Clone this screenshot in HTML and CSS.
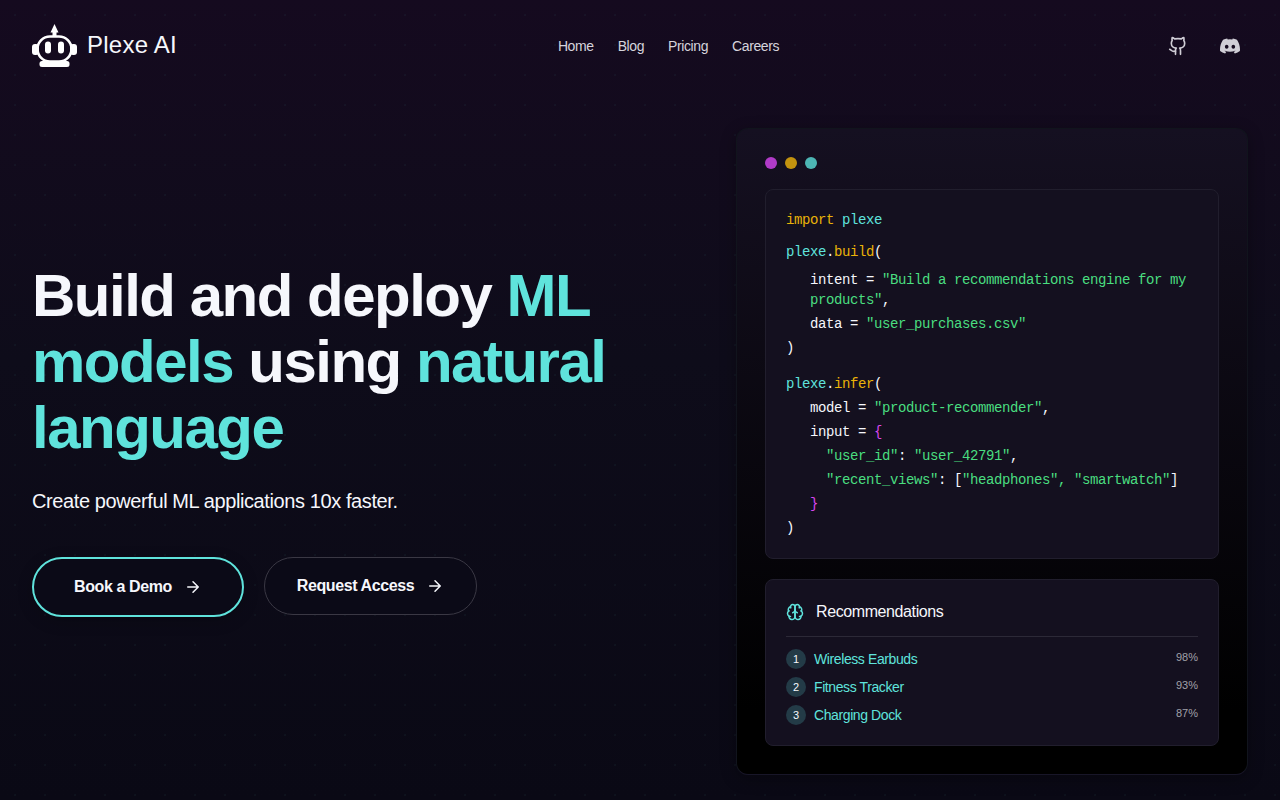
FILE: index.html
```html
<!DOCTYPE html>
<html lang="en">
<head>
  <meta charset="UTF-8" />
  <meta name="viewport" content="width=device-width, initial-scale=1.0"/>
  <title>Plexe AI</title>
  <link rel="stylesheet" href="styles.css">
</head>
<body>
  <header class="navbar">
    <a class="brand" href="#">
      <svg class="brand-logo" viewBox="0 0 45 44" aria-hidden="true">
        <path d="M22.500 0L26.500 8.500H24.500V12H20.500V8.500H18.500Z" fill="#fff"/>
        <rect x="0" y="20" width="7" height="11" rx="3" fill="#fff"/>
        <rect x="38" y="20" width="7" height="11" rx="3" fill="#fff"/>
        <rect x="5.500" y="12.500" width="34" height="25" rx="12.500" fill="none" stroke="#fff" stroke-width="2.600"/>
        <rect x="13" y="17.500" width="6" height="12" rx="3" fill="#fff"/>
        <rect x="26" y="17.500" width="6" height="12" rx="3" fill="#fff"/>
        <rect x="7.500" y="37" width="30" height="6" rx="2.500" fill="#fff"/>
      </svg>
      <span class="brand-name">Plexe AI</span>
    </a>
    <nav class="nav-links">
      <a href="#">Home</a>
      <a href="#">Blog</a>
      <a href="#">Pricing</a>
      <a href="#">Careers</a>
    </nav>
    <div class="social">
      <a href="#" aria-label="GitHub">
        <svg viewBox="0 0 24 24" width="20" height="20" fill="none" stroke="currentColor" stroke-width="2" stroke-linecap="round" stroke-linejoin="round">
          <path d="M15 22v-4a4.800 4.800 0 0 0-1-3.500c3 0 6-2 6-5.500.08-1.250-.27-2.480-1-3.500.28-1.150.28-2.350 0-3.500 0 0-1 0-3 1.500-2.640-.5-5.360-.5-8 0C6 2 5 2 5 2c-.3 1.150-.3 2.350 0 3.500A5.403 5.403 0 0 0 4 9c0 3.500 3 5.500 6 5.500-.39.490-.68 1.050-.85 1.650-.17.6-.22 1.230-.15 1.850v4"/>
          <path d="M9 18c-4.510 2-5-2-7-2"/>
        </svg>
      </a>
      <a href="#" aria-label="Discord">
        <svg viewBox="0 0 24 24" width="20" height="20" fill="currentColor">
          <path d="M20.317 4.370a19.791 19.791 0 0 0-4.885-1.515.074.074 0 0 0-.079.037c-.21.375-.444.864-.608 1.250a18.270 18.270 0 0 0-5.487 0 12.640 12.640 0 0 0-.617-1.250.077.077 0 0 0-.079-.037A19.736 19.736 0 0 0 3.677 4.370a.07.07 0 0 0-.032.027C.533 9.046-.32 13.580.099 18.057a.082.082 0 0 0 .031.057 19.900 19.900 0 0 0 5.993 3.030.078.078 0 0 0 .084-.028c.462-.63.874-1.295 1.226-1.994a.076.076 0 0 0-.041-.106 13.107 13.107 0 0 1-1.872-.892.077.077 0 0 1-.008-.128 10.200 10.200 0 0 0 .372-.292.074.074 0 0 1 .077-.010c3.928 1.793 8.180 1.793 12.062 0a.074.074 0 0 1 .078.010c.12.098.246.198.373.292a.077.077 0 0 1-.006.127 12.299 12.299 0 0 1-1.873.892.077.077 0 0 0-.041.107c.36.698.772 1.362 1.225 1.993a.076.076 0 0 0 .084.028 19.839 19.839 0 0 0 6.002-3.030.077.077 0 0 0 .032-.054c.5-5.177-.838-9.674-3.549-13.660a.061.061 0 0 0-.031-.030zM8.020 15.330c-1.183 0-2.157-1.085-2.157-2.419 0-1.333.956-2.419 2.157-2.419 1.210 0 2.176 1.096 2.157 2.420 0 1.333-.956 2.418-2.157 2.418zm7.975 0c-1.183 0-2.157-1.085-2.157-2.419 0-1.333.955-2.419 2.157-2.419 1.210 0 2.176 1.096 2.157 2.420 0 1.333-.946 2.418-2.157 2.418z"/>
        </svg>
      </a>
    </div>
  </header>

  <main class="hero">
    <section class="hero-text">
      <h1>Build and deploy <span>ML models</span> using <span>natural language</span></h1>
      <p>Create powerful ML applications 10x faster.</p>
      <div class="actions">
        <button class="btn primary">Book a Demo
          <svg class="arrow" viewBox="0 0 24 24"><path d="M5 12h14M12 5l7 7-7 7"/></svg>
        </button>
        <button class="btn secondary">Request Access
          <svg class="arrow" viewBox="0 0 24 24"><path d="M5 12h14M12 5l7 7-7 7"/></svg>
        </button>
      </div>
    </section>

    <section class="demo">
      <div class="dots">
        <span class="dot pink"></span>
        <span class="dot yellow"></span>
        <span class="dot teal"></span>
      </div>

      <code class="panel code">
        <span class="line"><b class="fn">import</b> <b class="mod">plexe</b></span>
        <span class="line call"><b class="mod">plexe</b>.<b class="fn">build</b>(</span>
        <span class="line indent first">intent = <b class="str">"Build a recommendations engine for my products"</b>,</span>
        <span class="line indent">data = <b class="str">"user_purchases.csv"</b></span>
        <span class="line">)</span>
        <span class="line second-call"><b class="mod">plexe</b>.<b class="fn">infer</b>(</span>
        <span class="line indent">model = <b class="str">"product-recommender"</b>,</span>
        <span class="line indent">input = <b class="brace">{</b></span>
        <span class="line indent-2"><b class="str">"user_id"</b>: <b class="str">"user_42791"</b>,</span>
        <span class="line indent-2"><b class="str">"recent_views"</b>: [<b class="str">"headphones", "smartwatch"</b>]</span>
        <span class="line indent"><b class="brace">}</b></span>
        <span class="line">)</span>
      </code>

      <div class="panel results">
        <h2>
          <svg viewBox="0 0 24 24" width="18" height="18" fill="none" stroke="currentColor" stroke-width="2" stroke-linecap="round" stroke-linejoin="round">
            <path d="M12 5a3 3 0 1 0-5.997.125 4 4 0 0 0-2.526 5.770 4 4 0 0 0 .556 6.588A4 4 0 1 0 12 18Z"/>
            <path d="M12 5a3 3 0 1 1 5.997.125 4 4 0 0 1 2.526 5.770 4 4 0 0 1-.556 6.588A4 4 0 1 1 12 18Z"/>
            <path d="M15 13a4.500 4.500 0 0 1-3-4 4.500 4.500 0 0 1-3 4"/>
            <path d="M17.599 6.500a3 3 0 0 0 .399-1.375M6.003 5.125A3 3 0 0 0 6.401 6.500M3.477 10.896a4 4 0 0 1 .585-.396M19.938 10.500a4 4 0 0 1 .585.396M6 18a4 4 0 0 1-1.967-.516M19.967 17.484A4 4 0 0 1 18 18"/>
          </svg>
          Recommendations
        </h2>
        <ol>
          <li><span class="rank">1</span><span class="item">Wireless Earbuds</span><span class="score">98%</span></li>
          <li><span class="rank">2</span><span class="item">Fitness Tracker</span><span class="score">93%</span></li>
          <li><span class="rank">3</span><span class="item">Charging Dock</span><span class="score">87%</span></li>
        </ol>
      </div>
    </section>
  </main>
</body>
</html>
```
FILE: styles.css
```css
* {
  box-sizing: border-box;
}

body {
  margin: 0;
  min-height: 100vh;
  font-family: "Liberation Sans", Arial, sans-serif;
  font-size: 16px;
  line-height: 24px;
  letter-spacing: -0.025em;
  color: #f6f7fc;
  background:
    radial-gradient(circle, rgba(95, 227, 220, 0.04) 1px, transparent 1px) 0 0 / 30px 30px,
    linear-gradient(180deg, #150a1f 0%, #0e0c1a 45%, #0a0915 100%);
}

a {
  color: inherit;
  text-decoration: none;
}

h1, h2, p, ol {
  margin: 0;
  padding: 0;
}

/* Navbar */
.navbar {
  display: flex;
  justify-content: space-between;
  align-items: center;
  padding: 24px 32px;
}

.brand {
  display: flex;
  align-items: center;
  gap: 10px;
}

.brand-logo {
  width: 45px;
  height: 44px;
}

.brand-name {
  font-size: 24px;
  line-height: 32px;
  padding-bottom: 2px;
  letter-spacing: 0.01em;
}

.nav-links {
  display: flex;
  gap: 24px;
  font-size: 14px;
  line-height: 20px;
  color: #d6d4dc;
}

.social {
  display: flex;
  justify-content: flex-end;
  gap: 16px;
  color: #d0ced6;
}

.social a {
  display: flex;
  padding: 8px;
}

.nav-links a:hover,
.social a:hover {
  color: #5fe3dc;
}

/* Hero */
.hero {
  display: grid;
  grid-template-columns: 1fr 1fr;
  gap: 32px;
  align-items: center;
  padding: 36px 32px 24px;
}

.hero-text {
  padding-bottom: 24px;
}

h1 {
  font-size: 60px;
  line-height: 66px;
  font-weight: bold;
  letter-spacing: -0.025em;
}

h1 span {
  color: #5fe3dc;
}

.hero-text p {
  margin: 24px 0 40px;
  font-size: 20px;
  line-height: 32px;
}

.actions {
  display: flex;
  align-items: flex-start;
  gap: 20px;
}

.btn {
  display: flex;
  align-items: center;
  gap: 12px;
  border-radius: 32px;
  background: #0b0a17;
  color: #f6f7fc;
  font: inherit;
  font-weight: bold;
  letter-spacing: inherit;
  cursor: pointer;
}

.btn.primary {
  padding: 16px 40px;
  border: 2px solid #5fe3dc;
  box-shadow: 0 4px 16px rgba(0, 0, 0, 0.2);
}

.btn.secondary {
  padding: 16px 32px;
  border: 1px solid #3a3844;
}

.arrow {
  width: 18px;
  height: 18px;
  fill: none;
  stroke: currentColor;
  stroke-width: 2;
  stroke-linecap: round;
  stroke-linejoin: round;
}

/* Demo card */
.demo {
  display: flex;
  flex-direction: column;
  gap: 20px;
  justify-self: end;
  width: 100%;
  max-width: 512px;
  padding: 28px;
  border: 1px solid #11141d;
  border-bottom-color: #181628;
  border-radius: 12px;
  background: linear-gradient(180deg, #151021 0%, #000 90%);
  box-shadow: 0 4px 16px rgba(0, 0, 0, 0.3);
}

.dots {
  display: flex;
  gap: 8px;
}

.dot {
  width: 12px;
  height: 12px;
  border-radius: 50%;
}

.pink { background: #b13bc8; }
.yellow { background: #c3930f; }
.teal { background: #4db6b4; }

.panel {
  padding: 20px;
  border: 1px solid #211e2d;
  border-radius: 8px;
  background: #14101f;
}

.code {
  display: flex;
  flex-direction: column;
  gap: 4px;
  font-family: "Liberation Mono", monospace;
  font-size: 14px;
  line-height: 20px;
}

.code b {
  font-weight: normal;
}

.call { margin-top: 8px; }
.first { margin-top: 4px; }
.second-call { margin-top: 12px; }
.indent { padding-left: 24px; }
.indent-2 { padding-left: 40px; }

.fn { color: #eab308; }
.mod { color: #5fe3dc; }
.str { color: #4ade80; }
.brace { color: #d946ef; }

.results h2 {
  display: flex;
  align-items: center;
  gap: 12px;
  padding-bottom: 12px;
  border-bottom: 1px solid #2c2937;
  font-size: 16px;
  font-weight: normal;
}

.results h2 svg {
  color: #5fe3dc;
}

.results ol {
  display: flex;
  flex-direction: column;
  gap: 8px;
  padding-top: 12px;
  list-style: none;
}

.results li {
  display: flex;
  gap: 8px;
  font-size: 14px;
  line-height: 20px;
}

.rank,
.score {
  font-size: 11px;
  letter-spacing: normal;
}

.rank {
  width: 20px;
  border-radius: 50%;
  background: #233b47;
  text-align: center;
}

.item {
  flex: 1;
  color: #5fe3dc;
}

.score {
  line-height: 16px;
  color: #a1a0a9;
}

@media (max-width: 900px) {
  .hero {
    grid-template-columns: 1fr;
  }

  .demo {
    justify-self: start;
  }

  h1 {
    font-size: 44px;
    line-height: 48px;
  }

  .actions {
    flex-wrap: wrap;
  }
}
```
